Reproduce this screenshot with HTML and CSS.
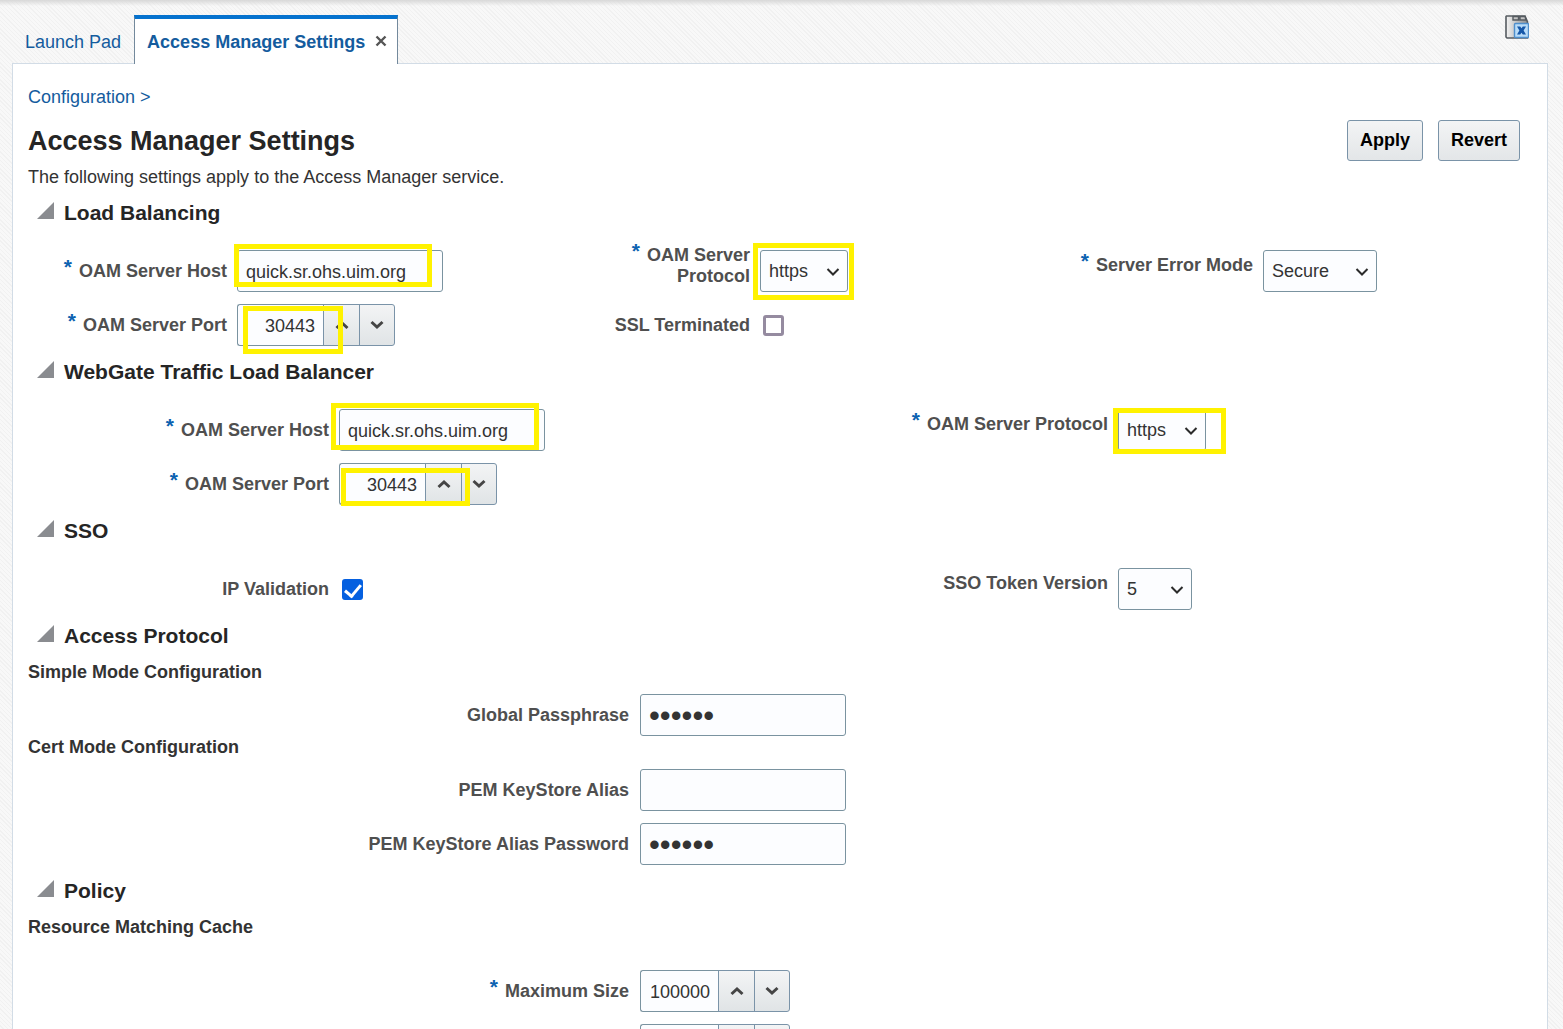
FILE: index.html
```html
<!DOCTYPE html>
<html lang="en">
<head>
  <meta charset="UTF-8">
  <meta name="viewport" content="width=device-width, initial-scale=1.0">
  <title>Access Manager Settings</title>
  <link rel="stylesheet" href="styles.css">
</head>
<body>
  <svg class="defs" width="0" height="0" aria-hidden="true">
    <symbol id="chevron" viewBox="0 0 14 10"><path d="M1.5 2l5.5 5.5L12.500 2" fill="none" stroke="#2b2b2b" stroke-width="2"/></symbol>
    <symbol id="up" viewBox="0 0 14 10"><path d="M1.500 8L7 3l5.500 5" fill="none" stroke="#454545" stroke-width="3"/></symbol>
    <symbol id="down" viewBox="0 0 14 10"><path d="M1.500 2L7 7l5.500-5" fill="none" stroke="#454545" stroke-width="3"/></symbol>
    <symbol id="disclosure" viewBox="0 0 17 17"><path d="M17 0v17H0z" fill="#8a8c90"/></symbol>
  </svg>

  <header class="tab-bar">
    <nav class="tabs">
      <a class="tab" href="#">Launch Pad</a>
      <div class="tab active">
        <a href="#">Access Manager Settings</a>
        <button type="button" class="tab-close" aria-label="Close tab">
          <svg width="12" height="12" viewBox="0 0 12 12"><path d="M1.500 1.500l9 9M10.500 1.500l-9 9" stroke="#555" stroke-width="2.400"/></svg>
        </button>
      </div>
    </nav>
    <button type="button" class="close-all" aria-label="Close all tabs">
      <svg width="24" height="24" viewBox="0 0 24 24">
        <defs>
          <linearGradient id="folder" x1="0" y1="0" x2="1" y2="0"><stop offset="0" stop-color="#f4f4f4"/><stop offset="1" stop-color="#8c8c8c"/></linearGradient>
        </defs>
        <path d="M1.500 1H20l2.500 6v16H2l-1-1V1.500z" fill="url(#folder)" stroke="#555b60" stroke-width="1.600"/>
        <path d="M8 1.500h5.500V5H8zM15 1.500h5L21 5h-6z" fill="#c4c4c4" stroke="#555b60" stroke-width="1.400"/>
        <rect x="9.500" y="8.500" width="14" height="14" rx="1" fill="#b9dcf8" stroke="#4f8fcc" stroke-width="1.400"/>
        <path d="M12 11.500h3.200l1.300 1.800 1.300-1.800H21l-2.400 4 2.400 4h-3.200l-1.300-1.800-1.300 1.800H12l2.400-4z" fill="#1557a8"/>
      </svg>
    </button>
  </header>

  <main class="panel">
    <nav class="breadcrumb"><a href="#">Configuration &gt;</a></nav>
    <div class="page-header">
      <h1>Access Manager Settings</h1>
      <div class="actions">
        <button type="submit" form="settingsForm" class="btn">Apply</button>
        <button type="reset" form="settingsForm" class="btn">Revert</button>
      </div>
    </div>
    <p class="intro">The following settings apply to the Access Manager service.</p>

    <form id="settingsForm" action="#" method="POST">
      <section>
        <h2><svg class="disclosure"><use href="#disclosure"/></svg>Load Balancing</h2>
        <div class="fields three">
          <div class="field">
            <label for="lbHost"><span class="req">*</span> OAM Server Host</label>
            <div class="control">
              <input type="text" id="lbHost" name="lbHost" value="quick.sr.ohs.uim.org">
              <span class="mark mark-lb-host"></span>
            </div>
          </div>
          <div class="field top">
            <label for="lbProtocol"><span class="req">*</span> OAM Server Protocol</label>
            <div class="control">
              <select id="lbProtocol" name="lbProtocol" class="protocol"><option>https</option><option>http</option></select>
              <svg class="chevron"><use href="#chevron"/></svg>
              <span class="mark mark-lb-protocol"></span>
            </div>
          </div>
          <div class="field top">
            <label for="errorMode"><span class="req">*</span> Server Error Mode</label>
            <div class="control">
              <select id="errorMode" name="errorMode" class="mode"><option>Secure</option></select>
              <svg class="chevron"><use href="#chevron"/></svg>
            </div>
          </div>
          <div class="field">
            <label for="lbPort"><span class="req">*</span> OAM Server Port</label>
            <div class="control spinner">
              <input type="text" id="lbPort" name="lbPort" value="30443">
              <button type="button" aria-label="Increase"><svg><use href="#up"/></svg></button>
              <button type="button" aria-label="Decrease"><svg><use href="#down"/></svg></button>
              <span class="mark mark-lb-port"></span>
            </div>
          </div>
          <div class="field">
            <label for="ssl">SSL Terminated</label>
            <div class="control"><input type="checkbox" id="ssl" name="ssl"></div>
          </div>
        </div>
      </section>

      <section>
        <h2><svg class="disclosure"><use href="#disclosure"/></svg>WebGate Traffic Load Balancer</h2>
        <div class="fields two">
          <div class="field">
            <label for="wgHost"><span class="req">*</span> OAM Server Host</label>
            <div class="control">
              <input type="text" id="wgHost" name="wgHost" value="quick.sr.ohs.uim.org">
              <span class="mark mark-wg-host"></span>
            </div>
          </div>
          <div class="field top">
            <label for="wgProtocol"><span class="req">*</span> OAM Server Protocol</label>
            <div class="control">
              <select id="wgProtocol" name="wgProtocol" class="protocol"><option>https</option><option>http</option></select>
              <svg class="chevron"><use href="#chevron"/></svg>
              <span class="mark mark-wg-protocol"></span>
            </div>
          </div>
          <div class="field">
            <label for="wgPort"><span class="req">*</span> OAM Server Port</label>
            <div class="control spinner">
              <input type="text" id="wgPort" name="wgPort" value="30443">
              <button type="button" aria-label="Increase"><svg><use href="#up"/></svg></button>
              <button type="button" aria-label="Decrease"><svg><use href="#down"/></svg></button>
              <span class="mark mark-wg-port"></span>
            </div>
          </div>
        </div>
      </section>

      <section>
        <h2><svg class="disclosure"><use href="#disclosure"/></svg>SSO</h2>
        <div class="fields two">
          <div class="field">
            <label for="ipValidation">IP Validation</label>
            <div class="control"><input type="checkbox" id="ipValidation" name="ipValidation" checked></div>
          </div>
          <div class="field top">
            <label for="tokenVersion">SSO Token Version</label>
            <div class="control">
              <select id="tokenVersion" name="tokenVersion" class="version"><option>5</option></select>
              <svg class="chevron"><use href="#chevron"/></svg>
            </div>
          </div>
        </div>
      </section>

      <section>
        <h2><svg class="disclosure"><use href="#disclosure"/></svg>Access Protocol</h2>
        <h3>Simple Mode Configuration</h3>
        <div class="fields one">
          <div class="field">
            <label for="passphrase">Global Passphrase</label>
            <div class="control"><input type="password" id="passphrase" name="passphrase" value="secret"></div>
          </div>
        </div>
        <h3>Cert Mode Configuration</h3>
        <div class="fields one">
          <div class="field">
            <label for="pemAlias">PEM KeyStore Alias</label>
            <div class="control"><input type="text" id="pemAlias" name="pemAlias"></div>
          </div>
          <div class="field">
            <label for="pemPassword">PEM KeyStore Alias Password</label>
            <div class="control"><input type="password" id="pemPassword" name="pemPassword" value="secret"></div>
          </div>
        </div>
      </section>

      <section>
        <h2><svg class="disclosure"><use href="#disclosure"/></svg>Policy</h2>
        <h3>Resource Matching Cache</h3>
        <div class="fields one cache">
          <div class="field">
            <label for="maxSize"><span class="req">*</span> Maximum Size</label>
            <div class="control spinner">
              <input type="text" id="maxSize" name="maxSize" value="100000">
              <button type="button" aria-label="Increase"><svg><use href="#up"/></svg></button>
              <button type="button" aria-label="Decrease"><svg><use href="#down"/></svg></button>
            </div>
          </div>
          <div class="field">
            <label for="timeToLive"></label>
            <div class="control spinner">
              <input type="text" id="timeToLive" name="timeToLive" aria-label="Time to Live">
              <button type="button" aria-label="Increase"><svg><use href="#up"/></svg></button>
              <button type="button" aria-label="Decrease"><svg><use href="#down"/></svg></button>
            </div>
          </div>
        </div>
      </section>
    </form>
  </main>
</body>
</html>
```
FILE: styles.css
```css
* {
  box-sizing: border-box;
}
body {
  margin: 0;
  height: 100vh;
  overflow: hidden;
  display: flex;
  flex-direction: column;
  padding: 0 15px 0 12px;
  font-family: "Liberation Sans", Arial, sans-serif;
  font-size: 18px;
  line-height: 21px;
  color: #333;
  background: linear-gradient(#d8d8d8, rgba(245, 245, 245, 0) 6px),
    repeating-linear-gradient(45deg, #f8f8f8 0, #f8f8f8 2px, #f1f1f1 2px, #f1f1f1 3px);
}
a {
  color: #145c9e;
  text-decoration: none;
}
button,
input,
select {
  font: inherit;
  color: inherit;
}
.defs {
  position: absolute;
}

/* tabs */
.tab-bar {
  display: flex;
  justify-content: space-between;
  padding: 15px 19px 0 0;
}
.tabs {
  display: flex;
  height: 49px;
  margin-bottom: -1px;
  z-index: 1;
}
.tab {
  display: flex;
  align-items: center;
  padding: 6px 13px 0;
}
.tab.active {
  gap: 10px;
  padding: 2px 10px 0 12px;
  background: #fff;
  border: 1px solid #73899c;
  border-top: 4px solid #0572ce;
  border-bottom: 0;
  font-weight: bold;
}
.tab-close,
.close-all {
  padding: 0;
  border: 0;
  background: none;
  display: flex;
  cursor: pointer;
}
.tab-close {
  margin-bottom: 3px;
}

/* page */
.panel {
  flex: 1 0 auto;
  background: #fff;
  border: 1px solid #d2dce6;
  padding: 23px 27px 0 15px;
}
.page-header {
  display: flex;
  justify-content: space-between;
  align-items: center;
  margin-top: 12px;
}
h1 {
  margin: 0;
  padding-top: 1px;
  font-size: 27px;
  line-height: 40px;
  color: #252525;
}
.actions {
  display: flex;
  gap: 15px;
}
.btn {
  height: 41px;
  padding: 0 12px;
  font-weight: bold;
  color: #000;
  background: linear-gradient(#f3f4f5, #e3e6e8);
  border: 1px solid #7a93a8;
  border-radius: 3px;
}
.intro {
  margin: 6px 0 12px;
}
section {
  margin-bottom: 13px;
}
h2 {
  display: flex;
  align-items: center;
  gap: 10px;
  margin: 0;
  padding-left: 9px;
  font-size: 21px;
  line-height: 26px;
  color: #252525;
}
.disclosure {
  width: 17px;
  height: 17px;
  margin-bottom: 5px;
}
h3 {
  margin: 0;
  padding-top: 1px;
  font-size: 18px;
  line-height: 20px;
}
h2 + h3 {
  margin-top: 12px;
}

/* fields */
.fields {
  display: grid;
  row-gap: 12px;
  margin-top: 12px;
}
h2 + .fields {
  margin-top: 24px;
}
.three {
  grid-template-columns: 523fr 503fr 466fr;
}
.two {
  grid-template-columns: 779fr 713fr;
}
.cache {
  margin-top: 33px;
}
.field {
  display: flex;
  align-items: center;
  gap: 10px;
  height: 42px;
}
.one .field {
  gap: 11px;
}
.field label {
  flex: none;
  width: 199px;
  padding-left: 12px;
  text-align: right;
  font-weight: bold;
  color: #4f4f4f;
}
.two label {
  width: 301px;
}
.one label {
  width: 601px;
}
.top label {
  margin-bottom: 11px;
}
.req {
  margin-right: 2px;
  color: #0b62b0;
  font-size: 21px;
  line-height: 0;
  vertical-align: 3px;
}
.control {
  position: relative;
  display: flex;
}
input[type="text"],
input[type="password"],
select {
  width: 206px;
  height: 42px;
  padding: 0 8px;
  color: #333;
  background: #fcfdff;
  border: 1px solid #7a93a0;
  border-radius: 3px;
}
input[type="text"],
input[type="password"] {
  padding-top: 2px;
}
/* larger masking dots */
input[type="password"] {
  font-size: 31px;
}
select {
  appearance: none;
}
select.protocol {
  width: 88px;
}
select.mode {
  width: 114px;
}
select.version {
  width: 74px;
}
.chevron {
  position: absolute;
  right: 8px;
  top: 17px;
  width: 14px;
  height: 10px;
  pointer-events: none;
}
input[type="checkbox"] {
  appearance: none;
  width: 21px;
  height: 21px;
  margin: 0 3px;
  border: 3px solid #958ba0;
  border-radius: 3px;
  background: #fff;
}
input[type="checkbox"]:checked {
  display: flex;
  justify-content: center;
  align-items: flex-start;
  background: #0560e0;
  border-color: #0560e0;
}
input[type="checkbox"]:checked::before {
  content: "";
  flex: none;
  width: 7px;
  height: 13px;
  margin-top: -1px;
  border: solid #fff;
  border-width: 0 3px 3px 0;
  transform: rotate(40deg);
}
.spinner input[type="text"] {
  width: 86px;
  text-align: right;
  border-right: 0;
  border-radius: 3px 0 0 3px;
}
.cache .spinner input[type="text"] {
  width: 78px;
}
.spinner button {
  width: 37px;
  height: 42px;
  padding: 0;
  display: flex;
  align-items: center;
  justify-content: center;
  background: linear-gradient(#f3f4f5, #e0e4e6);
  border: 1px solid #7a93a8;
}
.spinner button + button {
  width: 36px;
  margin-left: -1px;
  border-radius: 0 3px 3px 0;
}
.spinner svg {
  width: 14px;
  height: 10px;
}

/* highlight boxes over the edited values */
.mark {
  position: absolute;
  border: 5px solid #fff200;
  pointer-events: none;
}
.mark-lb-host {
  left: -3px;
  top: -6px;
  width: 198px;
  height: 43px;
}
.mark-lb-protocol {
  left: -7px;
  top: -7px;
  width: 101px;
  height: 57px;
}
.mark-lb-port {
  left: 6px;
  top: 2px;
  width: 100px;
  height: 48px;
}
.mark-wg-host {
  left: -8px;
  top: -6px;
  width: 208px;
  height: 47px;
}
.mark-wg-protocol {
  left: -5px;
  top: -1px;
  width: 113px;
  height: 46px;
}
.mark-wg-port {
  left: 2px;
  top: 5px;
  width: 129px;
  height: 38px;
}
```
